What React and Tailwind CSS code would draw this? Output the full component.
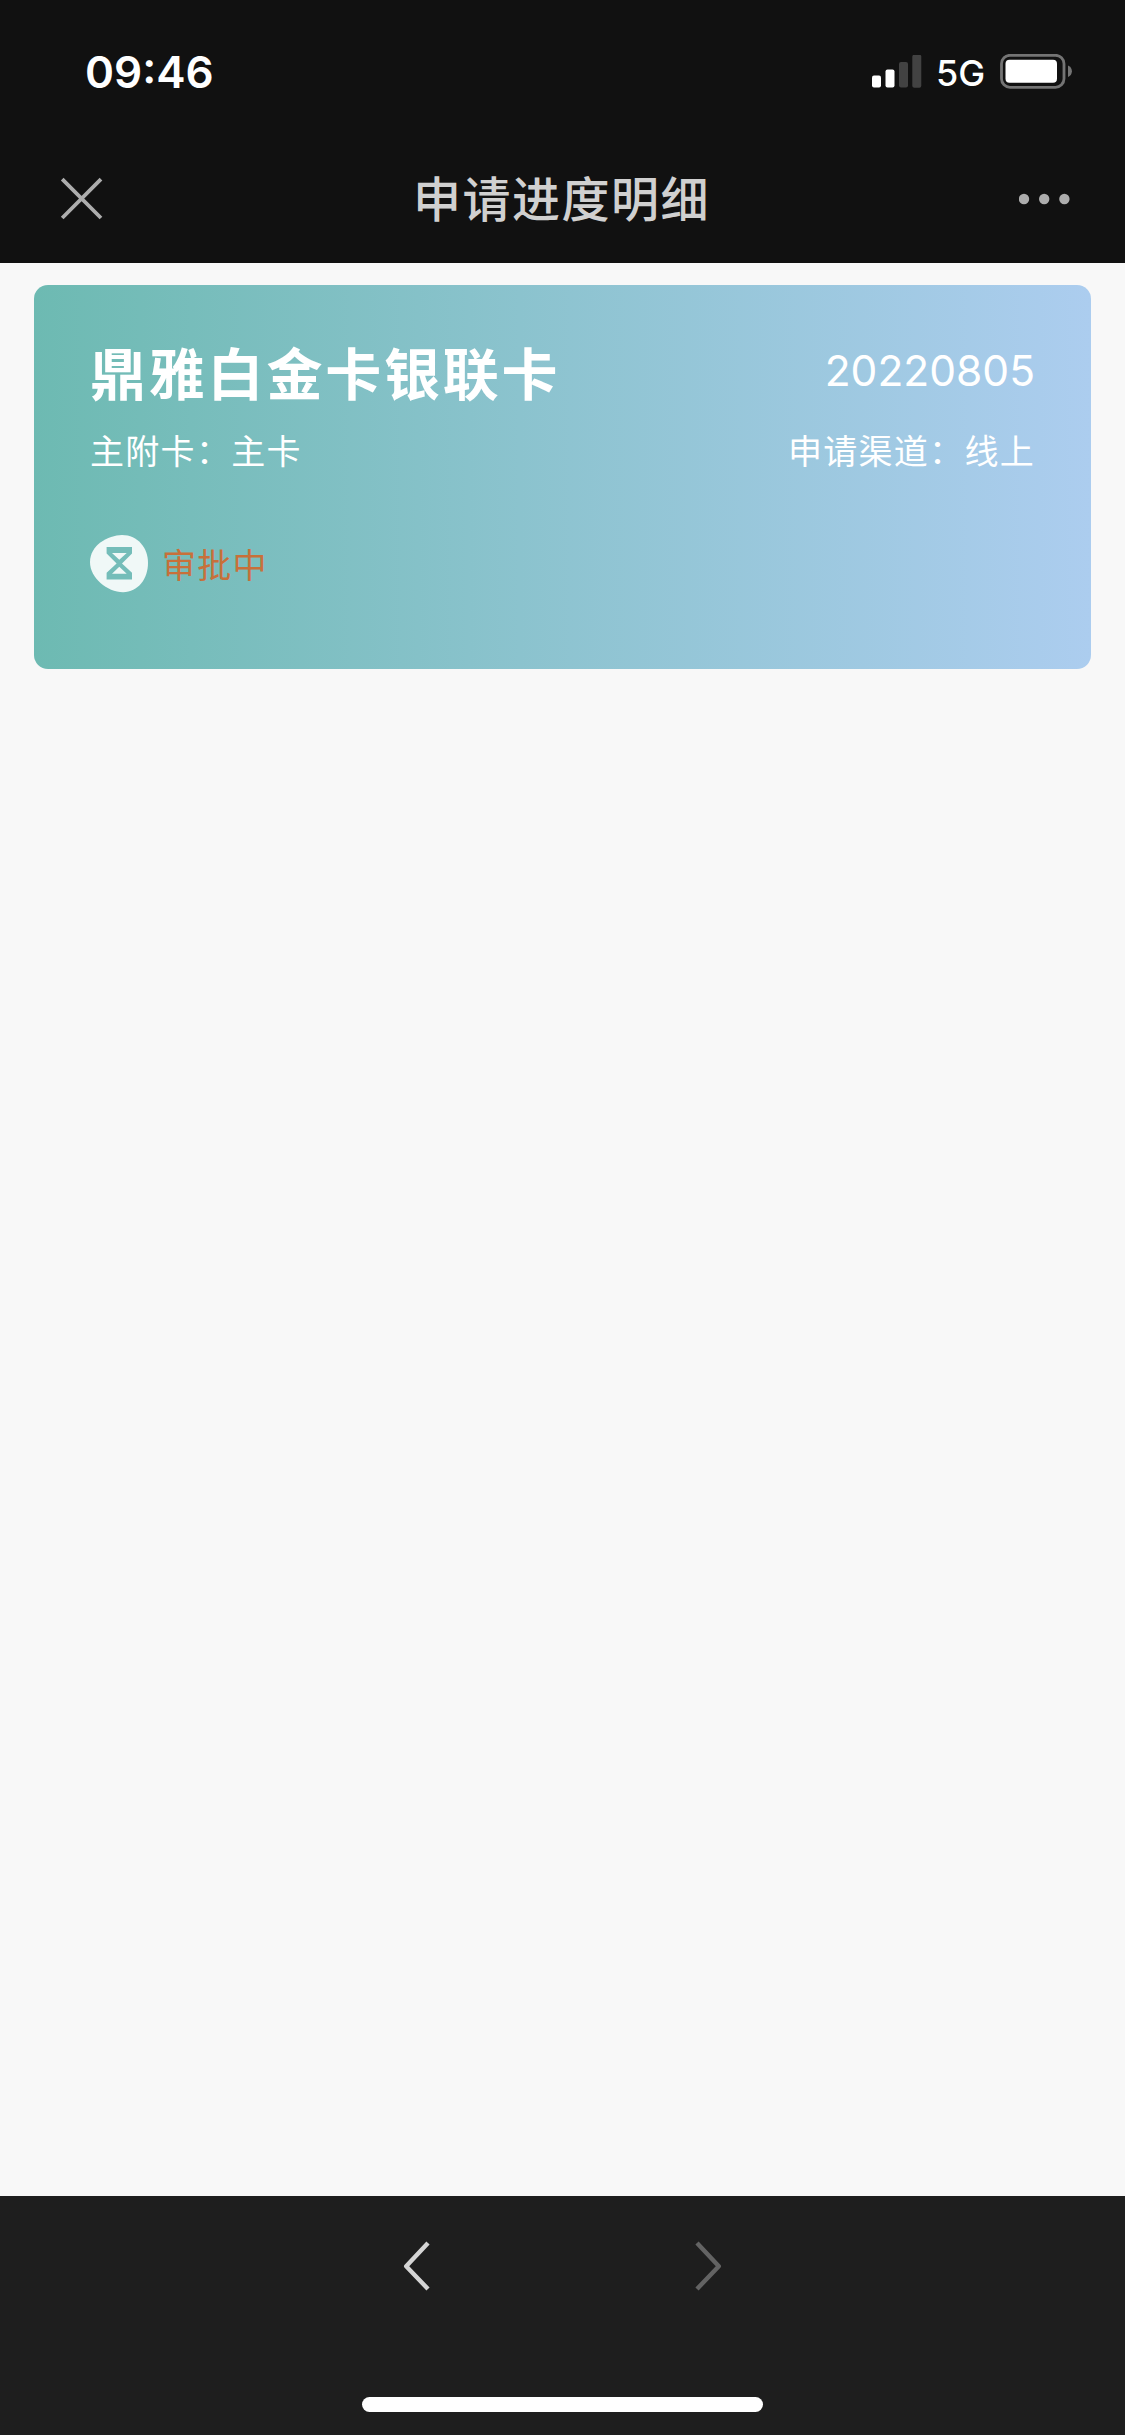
const card = {
  name: '鼎雅白金卡银联卡',
  date: '20220805',
  type: '主附卡：主卡',
  channel: '申请渠道：线上',
  status: '审批中',
};

function StatusBar() {
  return (
    <div className="flex h-[144px] items-center justify-between pl-[85px] pr-[52px] text-white">
      <span className="text-[44px] leading-[54px] font-semibold font-['Inter',sans-serif]">09:46</span>
      <div className="flex items-center">
        {/* Signal */}
        <svg className="h-[34px] w-[50px]" viewBox="0 0 50 34">
          <rect x="0" y="20.5" width="9" height="12" rx="2" fill="#fff" />
          <rect x="13.5" y="14.5" width="9" height="18" rx="2" fill="#fff" />
          <rect x="27" y="7" width="9" height="25.5" rx="2" fill="#424242" />
          <rect x="40.3" y="-0.3" width="9" height="33" rx="2" fill="#424242" />
        </svg>
        <span className="ml-[14px] w-[64px] pt-[2px] text-[36px] leading-[44px] font-medium font-['Inter',sans-serif]">5G</span>
        {/* Battery */}
        <svg className="h-[36px] w-[73px]" viewBox="0 0 73 36">
          <rect x="1.5" y="1.3" width="62.5" height="32" rx="8.5" fill="none" stroke="#747474" strokeWidth="2.8" />
          <rect x="5.5" y="5.8" width="51.5" height="23" rx="4" fill="#fff" />
          <path d="M68 11.5C73.2 13.5 73.2 21 68 23Z" fill="#747474" />
        </svg>
      </div>
    </div>
  );
}

function NavBar() {
  return (
    <div className="flex h-[118.5px] items-start justify-between pl-[60px] pr-[54px] pt-[33px]">
      <svg className="h-[44px] w-[44px]" viewBox="0 0 44 44" fill="none" stroke="#adadad" strokeWidth="3.8">
        <path d="M2.2 2.2L41 41M41 2.2L2.2 41" />
      </svg>
      <h1 className="-mt-[3px] text-[48px] leading-[44px] tracking-[1.5px] font-medium text-[#d0d0d0]">申请进度明细</h1>
      <svg className="h-[44px] w-[52px]" viewBox="0 0 52 44" fill="#adadad">
        <circle cx="5" cy="22" r="5.2" />
        <circle cx="25.2" cy="22" r="5.2" />
        <circle cx="45.4" cy="22" r="5.2" />
      </svg>
    </div>
  );
}

function HourglassIcon() {
  return (
    <svg className="h-[58px] w-[58px]" viewBox="0 0 58 58">
      <path
        d="M32 0C48 0 58 13 58 28C58 44 48 57 33 57.3C17 57 0 43 0 27C0 10 18 0.5 32 0Z"
        fill="#f0f8f7"
      />
      {/* Frame with the two sand chambers cut out */}
      <path
        fillRule="evenodd"
        d="M16.6 12H42V18.5L32 28.4L42 37.8V44.5H16.6V37.8L26.6 28.4L16.6 18.5ZM22 18L29.3 24.8L36.7 18ZM29.3 31.8L22 38.8H36.7Z"
        fill="#74bdb9"
      />
    </svg>
  );
}

function ProgressCard() {
  return (
    <div className="h-[384px] rounded-[14px] bg-linear-to-r from-[#6dbab2] to-[#accdef] px-[56px] pt-[50px] text-white">
      <div className="flex h-[74px] items-start justify-between">
        <h2 className="text-[56px] leading-[72px] tracking-[2.8px] font-bold">{card.name}</h2>
        <span className="mt-[10px] text-[42.5px] leading-[52px] font-normal font-['Inter',sans-serif]">{card.date}</span>
      </div>
      <div className="mt-[16px] flex justify-between text-[34px] leading-[50px] tracking-[1.3px] font-normal">
        <span>{card.type}</span>
        <span>{card.channel}</span>
      </div>
      <div className="mt-[60px] flex items-center">
        <HourglassIcon />
        <span className="ml-[14px] text-[34px] leading-[50px] tracking-[1.3px] font-normal text-[#c8703a]">{card.status}</span>
      </div>
    </div>
  );
}

function BottomBar() {
  return (
    <footer className="flex h-[239px] flex-col items-center justify-between bg-[#1e1e1e] pt-[45px] pb-[23px]">
      <div className="flex w-[320px] justify-between">
        <svg className="h-[50px] w-[28px]" viewBox="0 0 28 50" fill="none" stroke="#d5d5d5" strokeWidth="4.4" strokeLinejoin="round">
          <path d="M25 2L3.2 25.2L25 48" />
        </svg>
        <svg className="h-[50px] w-[28px]" viewBox="0 0 28 50" fill="none" stroke="#636363" strokeWidth="4.4" strokeLinejoin="round">
          <path d="M2 2L23.8 25.2L2 48" />
        </svg>
      </div>
      <div className="h-[15px] w-[401px] rounded-full bg-white" />
    </footer>
  );
}

export default function App() {
  return (
    <div lang="zh-CN" className="flex h-[2435px] w-[1125px] flex-col bg-[#f8f8f8] font-['Noto_Sans_CJK_SC',sans-serif]">
      <header className="bg-[#111111]">
        <StatusBar />
        <NavBar />
      </header>
      <main className="flex-1 px-[34px] pt-[22.5px]">
        <ProgressCard />
      </main>
      <BottomBar />
    </div>
  );
}
